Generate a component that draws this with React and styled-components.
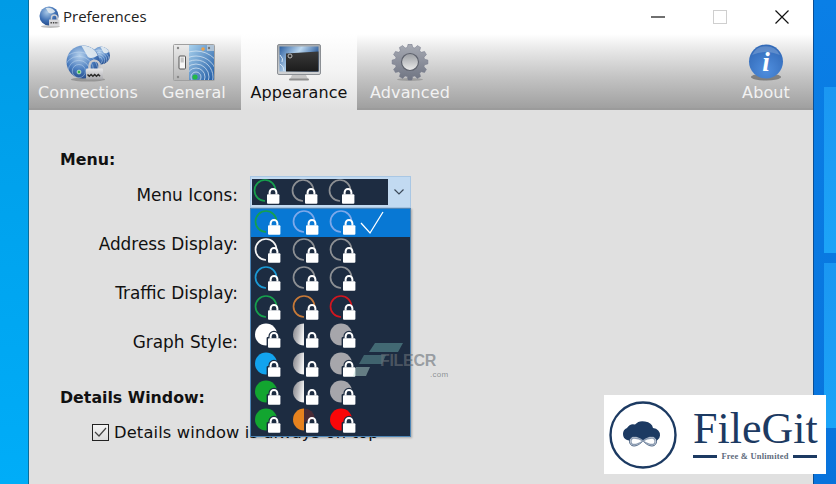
import React from "react";
import styled, { createGlobalStyle } from "styled-components";

const Global = createGlobalStyle`
  html, body { margin: 0; padding: 0; background: #0a78e0; }
  #root { width: 836px; height: 484px; overflow: hidden; }
  * { box-sizing: border-box; }
`;

const Page = styled.div`
  position: relative;
  display: flex;
  width: 836px;
  height: 484px;
  overflow: hidden;
  font-family: "DejaVu Sans", Verdana, sans-serif;
`;
const LeftDesk = styled.div`
  width: 29px;
  flex: none;
  background: linear-gradient(180deg, #009be6 0%, #00a4ef 50%, #00adf8 100%);
  border-right: 1px solid #0b6d9a;
`;
const RightDesk = styled.div`
  flex: 1;
  display: flex;
  flex-direction: column;
  gap: 10px;
  padding: 87px 0 0 10px;
  background: linear-gradient(180deg, #0a7fe6 0%, #0873dc 100%);
  border-left: 1px solid #0a4f96;
`;
const Pane = styled.div`
  height: ${(p) => p.$h}px;
  background: linear-gradient(180deg, #1a97f2 0%, #1ca4f8 100%);
`;
const Window = styled.div`
  width: 784px;
  flex: none;
  display: flex;
  flex-direction: column;
  background: #e0e0e0;
`;
const TitleBar = styled.div`
  height: 34px;
  flex: none;
  display: flex;
  align-items: center;
  background: #fff;
  padding-left: 10px;
  gap: 2px;
`;
const TitleText = styled.span`
  font-family: "Open Sans", "DejaVu Sans", sans-serif;
  font-size: 15px;
  color: #222;
  flex: 1;
  padding-bottom: 3px;
`;
const WinButton = styled.div`
  width: 62px;
  height: 30px;
  margin-left: -2px;
  display: flex;
  align-items: center;
  justify-content: center;
`;
const Toolbar = styled.div`
  height: 76px;
  flex: none;
  display: flex;
  align-items: stretch;
  background: linear-gradient(180deg, #ffffff 0%, #e4e4e4 25%, #c4c4c4 58%, #a0a0a0 100%);
  border-bottom: 2px solid #9b9b9b;
`;
const Tab = styled.div`
  width: ${(p) => p.$w}px;
  flex: none;
  display: flex;
  flex-direction: column;
  align-items: center;
  padding-top: 10px;
  height: ${(p) => (p.$active ? 76 : 74)}px;
  margin-left: ${(p) => p.$ml || 0}px;
  background: ${(p) => (p.$active ? "linear-gradient(180deg,#ffffff 0%,#f3f3f3 50%,#e0e0e0 100%)" : "transparent")};
`;
const TabIcon = styled.div`
  height: 38px;
  display: flex;
  align-items: center;
  justify-content: center;
`;
const TabLabel = styled.span`
  font-size: 16px;
  line-height: 20px;
  margin-top: 1px;
  letter-spacing: 0.1px;
  color: ${(p) => (p.$active ? "#111" : "#f2f2f2")};
  white-space: nowrap;
`;
const Content = styled.div`
  position: relative;
  flex: 1;
  padding: 39px 0 0 31px;
  color: #111;
`;
const Heading = styled.div`
  font-size: 15.8px;
  font-weight: 700;
  line-height: 22px;
  height: 22px;
`;
const FormRows = styled.div`
  display: flex;
  flex-direction: column;
  margin-top: -1px;
`;
const FormRow = styled.div`
  display: flex;
  align-items: center;
  height: 49px;
  gap: 11px;
`;
const Label = styled.div`
  width: 179px;
  padding-right: 1px;
  text-align: right;
  font-size: 16.9px;
  line-height: 20px;
  white-space: nowrap;
`;
const ComboWrap = styled.div`
  position: relative;
  width: 161px;
  height: 32px;
  margin-top: -6px;
  z-index: 3;
`;
const Combo = styled.div`
  display: flex;
  width: 161px;
  height: 32px;
  background: #c2daf1;
  padding: 2px 1px;
  border: 1px solid #a9c7e4;
`;
const ComboValue = styled.div`
  width: 136px;
  display: flex;
  align-items: center;
  background: #1d2c41;
  gap: 7.5px;
`;
const ComboArrow = styled.div`
  flex: 1;
  display: flex;
  align-items: center;
  justify-content: center;
`;
const Popup = styled.div`
  position: absolute;
  top: 32px;
  left: 0;
  width: 161px;
  height: 229px;
  background: #1d2c41;
  border: 1px solid #4d85b5;
  box-shadow: 1px 1px 2px rgba(0, 0, 0, 0.25);
`;
const Option = styled.div`
  display: flex;
  align-items: center;
  height: 28.4px;
  padding-left: 2px;
  gap: 7.5px;
  background: ${(p) => (p.$sel ? "#0878d4" : "transparent")};
`;
const Spacer = styled.div`
  height: 21px;
`;
const CheckRow = styled.div`
  display: flex;
  align-items: center;
  height: 20px;
  margin: 13px 0 0 32px;
  gap: 5px;
  font-size: 16.3px;
  letter-spacing: 0.15px;
  white-space: nowrap;
`;
const CheckBox = styled.div`
  width: 17px;
  height: 17px;
  flex: none;
  border: 1px solid #222;
  background: linear-gradient(180deg, #f4f4f4, #dcdcdc);
  display: flex;
  align-items: center;
  justify-content: center;
`;
const Watermark = styled.div`
  position: absolute;
  left: 340px;
  top: 233px;
  width: 120px;
  height: 40px;
  z-index: 4;
  pointer-events: none;
`;
const WatermarkText = styled.span`
  position: absolute;
  left: 11px;
  top: 9px;
  font-family: "Liberation Sans", sans-serif;
  font-weight: 700;
  font-size: 16px;
  letter-spacing: -0.3px;
  color: rgba(105, 112, 120, 0.62);
`;
const WatermarkSub = styled.span`
  position: absolute;
  left: 61px;
  top: 27px;
  font-family: "Liberation Sans", sans-serif;
  font-size: 8px;
  letter-spacing: 0.3px;
  color: rgba(125, 130, 135, 0.85);
`;
const Logo = styled.div`
  position: absolute;
  left: 604px;
  top: 395px;
  width: 222px;
  height: 79px;
  background: #fff;
  z-index: 5;
  display: flex;
  align-items: center;
  padding-left: 4px;
  gap: 15px;
`;
const LogoRight = styled.div`
  display: flex;
  flex-direction: column;
  align-items: stretch;
  width: 124px;
  color: #1c3a62;
`;
const LogoName = styled.div`
  font-family: "Liberation Serif", serif;
  font-size: 44px;
  line-height: 42px;
  white-space: nowrap;
`;
const LogoTag = styled.div`
  display: flex;
  align-items: center;
  gap: 4px;
  margin-top: 2px;
  font-family: "Liberation Serif", serif;
  font-weight: 700;
  font-size: 8.5px;
  line-height: 9px;
  letter-spacing: 0.2px;
  color: #5d6a7c;
  white-space: nowrap;
`;
const LogoLine = styled.div`
  flex: 1;
  height: 2.5px;
  background: #1c3a62;
`;

/* ---------- drawings ---------- */
function Lock({ x, y, cut }) {
  return (
    <g transform={`translate(${x} ${y})`}>
      {cut && (
        <>
          <path d="M2.6 5.5V3.4a3.4 3.4 0 0 1 6.8 0V5.5z" fill={cut} stroke={cut} strokeWidth="4.4" />
          <rect x="-1.4" y="4" width="14.8" height="11.4" rx="1" fill={cut} />
        </>
      )}
      <path d="M2.6 5.5V3.4a3.4 3.4 0 0 1 6.8 0V5.5" fill="none" stroke="#fff" strokeWidth="2" />
      <rect x="0" y="5.2" width="12.4" height="9.6" rx="1" fill="#fff" />
    </g>
  );
}
function RingIcon({ c, bg, fill, half }) {
  const id = React.useId();
  return (
    <svg width="30" height="28" viewBox="0 0 30 28">
      <defs>
        <linearGradient id={id} x1="0" y1="0" x2="1" y2="0.3">
          <stop offset="0" stopColor="#87878c" />
          <stop offset="0.55" stopColor="#b9b9bc" />
          <stop offset="1" stopColor="#f2f2f2" />
        </linearGradient>
      </defs>
      {fill ? (
        half ? (
          <>
            <path d="M13 1.500a11 11 0 0 0 0 22z" fill={half === "g" ? `url(#${id})` : c} />
            {half === "o" && <path d="M13 1.500a11 11 0 0 1 11 10l-11 4z" fill="#4a2c36" />}
          </>
        ) : (
          <circle cx="13" cy="12.5" r="11" fill={c} />
        )
      ) : (
        <path d="M13 23a10.5 10.5 0 1 1 10.5-10.5" fill="none" stroke={c} strokeWidth="1.7" />
      )}
      <Lock x={15} y={11} cut={fill && !half ? bg : undefined} />
    </svg>
  );
}
const G = "#8d9094";
const L = "#7ea9ea";
const rows = [
  [{ c: "#16a04d" }, { c: L }, { c: L }],
  [{ c: "#f4f4f4" }, { c: G }, { c: G }],
  [{ c: "#1b9ad6" }, { c: G }, { c: G }],
  [{ c: "#16a04d" }, { c: "#c87a38" }, { c: "#d2161f" }],
  [{ c: "#fff", fill: 1 }, { half: "g", fill: 1 }, { c: "#a6a6ab", fill: 1 }],
  [{ c: "#12a3ee", fill: 1 }, { half: "g", fill: 1 }, { c: "#a6a6ab", fill: 1 }],
  [{ c: "#12a530", fill: 1 }, { half: "g", fill: 1 }, { c: "#a6a6ab", fill: 1 }],
  [{ c: "#12a530", fill: 1 }, { half: "o", c: "#e6821e", fill: 1 }, { c: "#fa0608", fill: 1 }],
];

function GlobeBall({ x, y, r, clip }) {
  const ox = x - r * 0.25;
  const oy = y + r * 0.55;
  return (
    <g>
      <clipPath id={clip}><circle cx={x} cy={y} r={r} /></clipPath>
      <circle cx={x} cy={y} r={r} fill="url(#cg)" />
      <g clipPath={`url(#${clip})`}>
        <g fill="none" stroke="#cfe2f5" strokeWidth="0.6" opacity="0.75">
          <circle cx={ox} cy={oy} r={r * 0.4} />
          <circle cx={ox} cy={oy} r={r * 0.65} />
          <circle cx={ox} cy={oy} r={r * 0.9} />
          <circle cx={ox} cy={oy} r={r * 1.15} />
        </g>
        <path d={`M${x - r * 0.1} ${y - r}q${r * 0.8} 0.1 ${r} ${r * 0.6}q${-r * 0.4} ${r * 0.25} ${-r * 0.6} ${r * 0.1}z`} fill="#e8eef2" opacity="0.9" />
      </g>
    </g>
  );
}
function ConnectionsIcon() {
  return (
    <svg width="44" height="37" viewBox="0 0 44 37">
      <defs>
        <radialGradient id="cg" cx="0.4" cy="0.3" r="0.8">
          <stop offset="0" stopColor="#b4d0ec" />
          <stop offset="0.55" stopColor="#4a7cbe" />
          <stop offset="1" stopColor="#1d3f7c" />
        </radialGradient>
        <linearGradient id="cl" x1="0" x2="0" y1="0" y2="1">
          <stop offset="0" stopColor="#e8e8ea" />
          <stop offset="1" stopColor="#a8a8ac" />
        </linearGradient>
      </defs>
      <ellipse cx="22" cy="34.5" rx="17" ry="2" fill="#000" opacity="0.22" />
      <GlobeBall x={35} y={10.5} r={9} clip="clipSmall" />
      <GlobeBall x={17} y={17} r={16.5} clip="clipBig" />
      <circle cx="13" cy="27" r="1.9" fill="#36b54a" stroke="#d8f0d8" strokeWidth="0.8" />
      <path d="M23.5 24v-3.4a5 5 0 0 1 10 0V24" fill="none" stroke="#c9c9cd" strokeWidth="2.4" />
      <rect x="20" y="23.5" width="17" height="11" rx="1" fill="url(#cl)" />
      <path d="M21.5 29.5l1.8 1.8 1.8-1.8 1.8 1.8 1.8-1.8 1.8 1.8 1.8-1.8 1.8 1.8" fill="none" stroke="#2b2b2b" strokeWidth="1.5" />
    </svg>
  );
}
function GeneralIcon() {
  return (
    <svg width="42" height="38" viewBox="0 0 42 38">
      <defs>
        <linearGradient id="gpl" x1="0" x2="0" y1="0" y2="1">
          <stop offset="0" stopColor="#ececec" />
          <stop offset="1" stopColor="#b5b5b5" />
        </linearGradient>
        <linearGradient id="gmp" x1="0" x2="1" y1="0" y2="1">
          <stop offset="0" stopColor="#a9d2ee" />
          <stop offset="1" stopColor="#1f5aa4" />
        </linearGradient>
        <clipPath id="gcl"><rect x="16" y="1" width="25" height="35" /></clipPath>
      </defs>
      <rect x="0.5" y="0.5" width="41" height="36" rx="1" fill="url(#gpl)" stroke="#a0a0a0" />
      <rect x="16" y="1" width="25" height="35" fill="url(#gmp)" />
      <g clipPath="url(#gcl)" fill="none" stroke="#e2eef8" strokeWidth="0.8" opacity="0.85">
        <circle cx="23" cy="33" r="5" />
        <circle cx="23" cy="33" r="9" />
        <circle cx="23" cy="33" r="13" />
        <circle cx="23" cy="33" r="17" />
        <circle cx="23" cy="33" r="21" />
        <circle cx="23" cy="33" r="26" />
      </g>
      <rect x="34" y="1" width="7" height="6" fill="#cfd6dc" opacity="0.7" />
      <circle cx="30" cy="5" r="1.8" fill="#e9a04a" />
      <circle cx="22" cy="33" r="2.6" fill="#22b848" />
      <rect x="6" y="12" width="6.5" height="13" rx="1" fill="#f6f6f6" stroke="#555" />
      <rect x="7.6" y="13.5" width="3.2" height="5" fill="#c4c4c4" />
      <circle cx="5" cy="4" r="1.2" fill="#888" />
      <circle cx="5" cy="33" r="1.2" fill="#888" />
      <circle cx="36" cy="4" r="1.2" fill="#777" />
    </svg>
  );
}
function MonitorIcon() {
  return (
    <svg width="44" height="38" viewBox="0 0 44 38">
      <defs>
        <linearGradient id="mb" x1="0" x2="0" y1="0" y2="1">
          <stop offset="0" stopColor="#a6aaae" />
          <stop offset="1" stopColor="#d0d2d4" />
        </linearGradient>
        <linearGradient id="ms" x1="0" x2="1" y1="0" y2="0.4">
          <stop offset="0" stopColor="#2c5fa0" />
          <stop offset="0.5" stopColor="#bcd8f0" />
          <stop offset="1" stopColor="#1d4f92" />
        </linearGradient>
        <linearGradient id="md" x1="0" x2="0" y1="0" y2="1">
          <stop offset="0" stopColor="#3a3a3a" />
          <stop offset="1" stopColor="#1c1c1c" />
        </linearGradient>
      </defs>
      <path d="M15 31h14l2 4H13z" fill="#c6c6c6" />
      <rect x="12" y="34.5" width="20" height="2" rx="1" fill="#8e8e8e" />
      <rect x="0.5" y="0.5" width="43" height="30" rx="1.5" fill="url(#mb)" stroke="#8b8f94" />
      <rect x="2.5" y="2.5" width="39" height="25" fill="url(#ms)" />
      <path d="M9 9.5L41.5 7.5v20H9z" fill="url(#md)" />
      <circle cx="13" cy="12" r="2" fill="none" stroke="#bdbdbd" strokeWidth="1" />
      <path d="M3 11q4 4 2 7M3 20q4 2 4 7" stroke="#d9e8f5" strokeWidth="1" fill="none" />
    </svg>
  );
}
function gearPath() {
  const teeth = 12;
  const cx = 20, cy = 18, ro = 18, ri = 14.8;
  let d = "";
  for (let i = 0; i < teeth; i++) {
    const a = (i / teeth) * Math.PI * 2;
    const s = (Math.PI * 2) / teeth;
    const pts = [[ri, a - s * 0.36], [ro, a - s * 0.2], [ro, a + s * 0.2], [ri, a + s * 0.36]];
    pts.forEach(([r, t], j) => {
      const px = (cx + r * Math.cos(t)).toFixed(2);
      const py = (cy + r * Math.sin(t)).toFixed(2);
      d += `${i === 0 && j === 0 ? "M" : "L"}${px} ${py}`;
    });
  }
  return d + "Z";
}
function GearIcon() {
  return (
    <svg width="40" height="38" viewBox="0 0 40 38">
      <defs>
        <linearGradient id="gr" x1="0" x2="0" y1="0" y2="1">
          <stop offset="0" stopColor="#a8abb4" />
          <stop offset="1" stopColor="#6f7482" />
        </linearGradient>
        <linearGradient id="gh" x1="0" x2="0" y1="0" y2="1">
          <stop offset="0" stopColor="#9a9da2" />
          <stop offset="1" stopColor="#ececec" />
        </linearGradient>
      </defs>
      <ellipse cx="20" cy="35.5" rx="13" ry="1.5" fill="#000" opacity="0.18" />
      <path d={gearPath()} fill="url(#gr)" stroke="#74788a" strokeWidth="0.5" />
      <circle cx="20" cy="18" r="8.5" fill="url(#gh)" stroke="#5d616c" strokeWidth="1.2" />
    </svg>
  );
}
function InfoIcon() {
  return (
    <svg width="36" height="38" viewBox="0 0 36 38">
      <defs>
        <radialGradient id="ib" cx="0.5" cy="0.75" r="0.8">
          <stop offset="0" stopColor="#4f8ede" />
          <stop offset="1" stopColor="#2f66b4" />
        </radialGradient>
      </defs>
      <ellipse cx="18" cy="33" rx="15" ry="3.5" fill="#000" opacity="0.35" />
      <circle cx="18" cy="17.5" r="17" fill="url(#ib)" />
      <path d="M4 11a15.5 15.5 0 0 1 28 0q-14 -6 -28 0z" fill="#fff" opacity="0.2" />
      <text x="18" y="27" textAnchor="middle" fontFamily="Liberation Serif, serif" fontWeight="700" fontStyle="italic" fontSize="27" fill="#fff">i</text>
    </svg>
  );
}
function TitleGlobe() {
  return (
    <svg width="22" height="22" viewBox="0 0 46 46">
      <defs>
        <radialGradient id="tg" cx="0.4" cy="0.3" r="0.8">
          <stop offset="0" stopColor="#a8c8e8" />
          <stop offset="0.55" stopColor="#3f70b4" />
          <stop offset="1" stopColor="#1d3f7c" />
        </radialGradient>
      </defs>
      <ellipse cx="24" cy="43" rx="20" ry="3" fill="#000" opacity="0.25" />
      <circle cx="21" cy="21" r="20" fill="url(#tg)" />
      <path d="M14 4q14 -2 20 8q-8 6 -14 2z" fill="#e8eef2" opacity="0.85" />
      <path d="M26 29v-4a6 6 0 0 1 12 0v4" fill="none" stroke="#cfcfd3" strokeWidth="3" />
      <rect x="21" y="28" width="22" height="14" rx="1" fill="#d9d9dc" />
      <path d="M24 35h16" stroke="#444" strokeWidth="3" strokeDasharray="3 2" />
    </svg>
  );
}
function LogoMark() {
  return (
    <svg width="70" height="70" viewBox="0 0 70 70">
      <circle cx="35" cy="35" r="32.5" fill="none" stroke="#1c3a62" strokeWidth="2.4" />
      <path d="M19 40a6.5 6.5 0 0 1 0-12q3-5 8-3.5 4-4.5 10-3 7 1 8 6.5 7 1 7 7.5 0 3-3 5H21z" fill="#1c3a62" />
      <path d="M35 41c-3-3.5-6-4.5-9-4.5-6 0-6 9.5 0 9.5 3 0 6-2 9-5 3 3 6 5 9 5 6 0 6-9.5 0-9.5-3 0-6 1-9 4.5z" fill="#fff" stroke="#1c3a62" strokeWidth="0.8" />
      <path d="M35 41c-3-2.5-6-3-9-3-4 0-4 6.5 0 6.5 3 0 6-1.5 9-3.5 3 2 6 3.500 9 3.500 4 0 4-6.500 0-6.500-3 0-6 .5-9 3z" fill="none" stroke="#8c9cb2" strokeWidth="1.3" />
    </svg>
  );
}
function WatermarkShape() {
  return (
    <svg width="60" height="40" viewBox="0 0 60 40" style={{ position: "absolute", left: -16, top: 0 }}>
      <path d="M22 0h28l-5 9H16z" fill="rgba(120,190,185,0.42)" />
      <path d="M11 12h22l-4 9H6z" fill="rgba(120,190,185,0.38)" />
      <path d="M3 24h14l-4 9H0z" fill="rgba(190,225,215,0.45)" />
    </svg>
  );
}

export default function App() {
  return (
    <Page>
      <Global />
      <LeftDesk />
      <Window>
        <TitleBar>
          <TitleGlobe />
          <TitleText>Preferences</TitleText>
          <WinButton>
            <svg width="16" height="16" viewBox="0 0 16 16"><path d="M1 8h14" stroke="#111" strokeWidth="1.2" /></svg>
          </WinButton>
          <WinButton>
            <svg width="16" height="16" viewBox="0 0 16 16"><rect x="1.5" y="1.5" width="13" height="13" fill="none" stroke="#cfcfcf" strokeWidth="1" /></svg>
          </WinButton>
          <WinButton>
            <svg width="16" height="16" viewBox="0 0 16 16"><path d="M1.5 1.5l13 13M14.5 1.5l-13 13" stroke="#111" strokeWidth="1.2" /></svg>
          </WinButton>
        </TitleBar>
        <Toolbar>
          <Tab $w={118}><TabIcon><ConnectionsIcon /></TabIcon><TabLabel>Connections</TabLabel></Tab>
          <Tab $w={94}><TabIcon><GeneralIcon /></TabIcon><TabLabel>General</TabLabel></Tab>
          <Tab $w={116} $active><TabIcon><MonitorIcon /></TabIcon><TabLabel $active>Appearance</TabLabel></Tab>
          <Tab $w={106}><TabIcon><GearIcon /></TabIcon><TabLabel>Advanced</TabLabel></Tab>
          <Tab $w={94} $ml={256}><TabIcon><InfoIcon /></TabIcon><TabLabel>About</TabLabel></Tab>
        </Toolbar>
        <Content>
          <Heading>Menu:</Heading>
          <FormRows>
            <FormRow>
              <Label>Menu Icons:</Label>
              <ComboWrap>
                <Combo>
                  <ComboValue>
                    <RingIcon c="#16a04d" />
                    <RingIcon c={G} />
                    <RingIcon c={G} />
                  </ComboValue>
                  <ComboArrow>
                    <svg width="12" height="8" viewBox="0 0 12 8"><path d="M1.5 1.5L6 6l4.5-4.5" fill="none" stroke="#3c4a5a" strokeWidth="1.2" /></svg>
                  </ComboArrow>
                </Combo>
                <Popup>
                  {rows.map((r, i) => (
                    <Option key={i} $sel={i === 0}>
                      {r.map((ic, j) => (
                        <RingIcon key={j} {...ic} bg="#1d2c41" />
                      ))}
                      {i === 0 && (
                        <svg width="24" height="24" viewBox="0 0 24 24" style={{ marginLeft: -6 }}>
                          <path d="M1 12l9 10L23 1" fill="none" stroke="#fff" strokeWidth="1.3" />
                        </svg>
                      )}
                    </Option>
                  ))}
                </Popup>
              </ComboWrap>
            </FormRow>
            <FormRow><Label>Address Display:</Label></FormRow>
            <FormRow><Label>Traffic Display:</Label></FormRow>
            <FormRow><Label>Graph Style:</Label></FormRow>
          </FormRows>
          <Spacer />
          <Heading>Details Window:</Heading>
          <CheckRow>
            <CheckBox>
              <svg width="13" height="11" viewBox="0 0 13 11"><path d="M1 5l4 4 7-8" fill="none" stroke="#444" strokeWidth="1.2" /></svg>
            </CheckBox>
            Details window is always on top
          </CheckRow>
          <Watermark>
            <WatermarkShape />
            <WatermarkText>FILECR</WatermarkText>
            <WatermarkSub>.com</WatermarkSub>
          </Watermark>
        </Content>
      </Window>
      <RightDesk>
        <Pane $h={166} />
        <Pane $h={165} />
      </RightDesk>
      <Logo>
        <LogoMark />
        <LogoRight>
          <LogoName>FileGit</LogoName>
          <LogoTag><LogoLine />Free &amp; Unlimited<LogoLine /></LogoTag>
        </LogoRight>
      </Logo>
    </Page>
  );
}
